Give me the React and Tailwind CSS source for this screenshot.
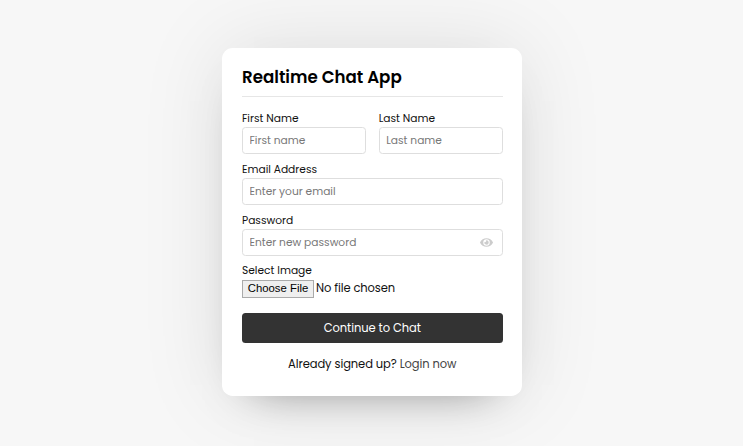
import { FaEye } from "react-icons/fa";

function Field({ label, placeholder, type = "text", inputPadding = "pt-px", children }) {
  return (
    <label className="block min-w-0 flex-1">
      <span className="block h-[17px] text-[10.67px] leading-[17px] text-[#111]">{label}</span>
      <span className="flex h-[27px] items-center rounded-[3.5px] border border-[#dedede] bg-white px-[6.5px]">
        <input
          type={type}
          placeholder={placeholder}
          className={`h-full min-w-0 flex-1 bg-transparent text-[10.67px] outline-none placeholder:text-[#787878] ${inputPadding}`}
        />
        {children}
      </span>
    </label>
  );
}

export default function App() {
  return (
    <main className="flex h-[446px] w-[743px] justify-center overflow-hidden bg-[#f7f7f7] pt-[48px] pl-px font-[Poppins,Inter,sans-serif] text-black">
      <section className="h-[348px] w-[300px] rounded-[10.67px] bg-white px-[20px] pt-[16px] shadow-[0_0_85px_0_rgba(0,0,0,0.1),0_21px_43px_-32px_rgba(0,0,0,0.5)]">
        <h1 className="h-[33px] w-[260.5px] border-b border-[#e6e6e6] text-[16.67px] leading-[26px] font-semibold">
          Realtime Chat App
        </h1>
        <form className="w-[260.5px] pt-[13px]">
          <div className="flex gap-[13px]">
            <Field label="First Name" placeholder="First name" inputPadding="pt-px" />
            <Field label="Last Name" placeholder="Last name" inputPadding="pt-px" />
          </div>
          <div className="mt-[7px] flex">
            <Field label="Email Address" placeholder="Enter your email" />
          </div>
          <div className="mt-[7px] flex">
            <Field label="Password" placeholder="Enter new password" type="password">
              <FaEye className="mr-[2px] size-[13px] text-[#ccc]" />
            </Field>
          </div>
          <div className="mt-[6px]">
            <div className="h-[18px] text-[10.67px] leading-[18px] text-[#111]">Select Image</div>
            <div className="flex h-[18px] items-center">
              <button
                type="button"
                className="h-[18px] w-[72px] border border-[#aaa] bg-[#efefef] pb-[2px] font-['Liberation_Sans',sans-serif] text-[11.33px] leading-[14px] whitespace-nowrap"
              >
                Choose File
              </button>
              <span className="mb-[2px] ml-[2px] text-[11.5px] leading-[16px] tracking-[-0.09px] text-[#111]">No file chosen</span>
            </div>
          </div>
          <button
            type="button"
            className="mt-[15px] block h-[30px] w-full rounded-[3.5px] bg-[#333] text-[11.5px] leading-[30px] tracking-[-0.07px] text-white"
          >
            Continue to Chat
          </button>
        </form>
        <p className="mt-[12px] w-[260.5px] text-center text-[11.5px] leading-[19px] tracking-[-0.09px] text-[#111]">
          Already signed up? <a className="text-[#444]">Login now</a>
        </p>
      </section>
    </main>
  );
}
